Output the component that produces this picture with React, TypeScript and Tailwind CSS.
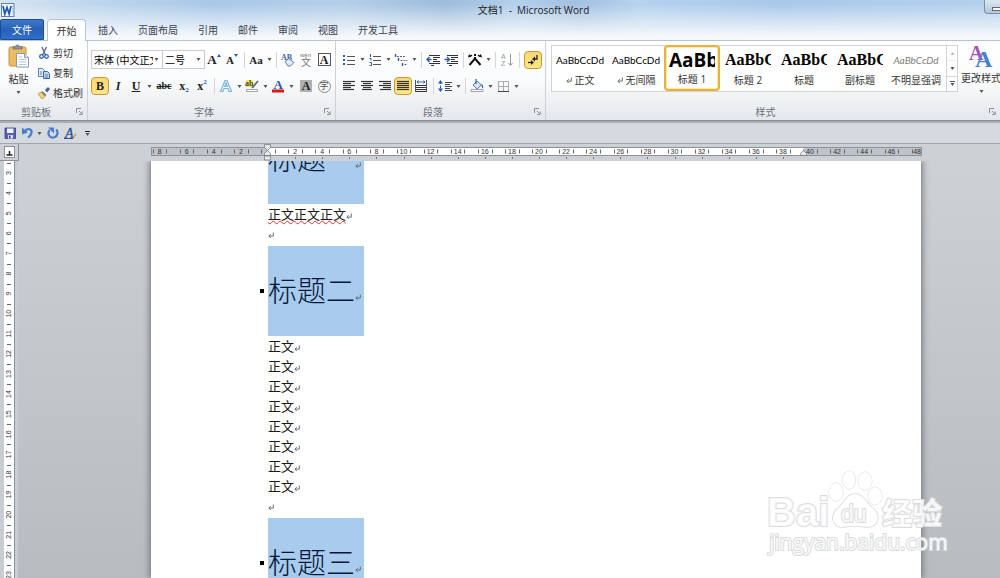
import type { ReactNode } from "react";
import clsx from "clsx";

const UI_FONT = "font-['Open_Sans','Noto_Sans_CJK_SC',sans-serif]";
const SERIF = "font-['Liberation_Serif',serif]";

const tabs = ["插入", "页面布局", "引用", "邮件", "审阅", "视图", "开发工具"];

const styleItems = [
  { label: "正文", sample: "AaBbCcDd", mark: true, font: "justify-center font-['Lato'] text-[10px] text-black" },
  { label: "无间隔", sample: "AaBbCcDd", mark: true, font: "justify-center font-['Lato'] text-[10px] text-black" },
  { label: "标题 1", sample: "AaBb", active: true, font: "font-['Open_Sans'] text-[19px] font-bold text-black" },
  { label: "标题 2", sample: "AaBbC", font: "font-['Liberation_Serif'] text-[16px] font-bold text-black" },
  { label: "标题", sample: "AaBbC", font: "font-['Liberation_Serif'] text-[16px] font-bold text-black" },
  { label: "副标题", sample: "AaBbC", font: "font-['Liberation_Serif'] text-[16px] font-bold text-black" },
  { label: "不明显强调", sample: "AaBbCcDd", font: "justify-center font-['Lato'] text-[10px] italic text-[#808080]" },
];

const Caret = ({ className = "" }: { className?: string }) => (
  <svg viewBox="0 0 5 3" className={clsx("w-[5px] h-[3px] shrink-0", className)}>
    <path d="M0.5 0h4L2.5 3z" fill="#555" />
  </svg>
);

const Sep = () => (
  <span className="flex w-[6px] shrink-0 justify-center">
    <span className="h-4 w-px bg-[#d3d6da]" />
  </span>
);

type ToolProps = {
  label: string;
  children: ReactNode;
  active?: boolean;
  menu?: boolean;
  wide?: boolean;
};

const Tool = ({ label, children, active, menu, wide }: ToolProps) => (
  <button
    type="button"
    aria-label={label}
    className={clsx(
      "flex h-[18px] shrink-0 items-center",
      active && "rounded-sm border border-[#c79a35] bg-linear-to-b from-[#fbd873] to-[#fde68a]"
    )}
  >
    <span
      className={clsx(
        "flex h-full items-center justify-center text-[#222]",
        wide ? "w-[22px]" : active ? "w-4" : "w-[18px]"
      )}
    >
      {children}
    </span>
    {menu && (
      <span className="flex w-2 justify-center">
        <Caret />
      </span>
    )}
  </button>
);

const Glyph = ({ children }: { children: ReactNode }) => (
  <svg viewBox="0 0 14 14" className="w-[14px] h-[14px] overflow-visible" fill="none">
    {children}
  </svg>
);

const ReturnMark = ({ className = "" }: { className?: string }) => (
  <svg viewBox="0 0 6 7" className={clsx("w-[6px] h-[7px] shrink-0", className)} fill="none" stroke="#6b7078">
    <path d="M5.3 0.5v3.6H1" />
    <path d="M2.8 2.2L0.8 4.1l2 2" />
  </svg>
);

const Launcher = () => (
  <button type="button" aria-label="更多选项" className="shrink-0">
    <svg viewBox="0 0 7 7" className="w-[7px] h-[7px]" fill="none" stroke="#8a8f96">
      <path d="M0.5 5V0.5H5" />
      <path d="M2.8 2.8l3 3M6.2 3.5v3H3.2" />
    </svg>
  </button>
);

type GroupProps = { title: string; className: string; children: ReactNode };

const Group = ({ title, className, children }: GroupProps) => (
  <section aria-label={title} className={clsx("flex flex-col", className)}>
    <div className="flex-1">{children}</div>
    <div className="flex h-[17px] items-center pr-[4px] text-[#6a717b]">
      <span className="flex-1 pr-1 text-center">{title}</span>
      <Launcher />
    </div>
  </section>
);

/* rows of text lines used by the alignment icons */
const Lines = ({ rows }: { rows: [number, number][] }) => (
  <Glyph>
    {rows.map(([x1, x2], i) => (
      <path key={i} d={`M${x1} ${2.5 + i * 2}H${x2}`} stroke="#333" strokeWidth="1.2" />
    ))}
  </Glyph>
);

const TitleBar = () => (
  <header className="flex h-[19px] items-center">
    <svg viewBox="0 0 14 14" className="ml-px h-[14px] w-[14px] shrink-0" fill="none">
      <rect x="0.5" y="0.5" width="12.5" height="13" fill="#f2f7fd" stroke="#5f84b3" />
      <path d="M11 3.5h1.500M11 6h1.500M11 8.500h1.500M11 11h1.500" stroke="#8da9cf" />
      <path d="M2 3l1.800 8L6 4.500 8.200 11 10 3" stroke="#1f57a8" strokeWidth="1.700" />
    </svg>
    <h1 className="flex-1 pl-[68px] text-center text-[10px] whitespace-pre text-[#1c1c1c]">
      {"文档1  -  Microsoft Word"}
    </h1>
    <button
      type="button"
      aria-label="最小化"
      className="h-[14px] w-4 self-start rounded-bl-[4px] border-b border-l border-[#7c8ea5] bg-linear-to-b from-[#dce8f4] to-[#b5c5d6] pl-[7px]"
    >
      <span className="mt-1 block h-[4px] border border-r-0 border-[#5b6878] bg-white" />
    </button>
  </header>
);

const TabBar = () => (
  <nav className="flex h-[22px] border-b border-[#b8c3d0]">
    <button type="button" className="w-11 rounded-t-xs border border-[#1d4b94] bg-linear-to-b from-[#3f78c8] via-[#2860b6] to-[#2f6fcb] text-white">
      文件
    </button>
    <button type="button" className="mr-[2px] -mb-px ml-[3px] w-[39px] rounded-t-sm border border-b-0 border-[#b8c3d0] bg-white text-[#333]">
      开始
    </button>
    {tabs.map((t) => (
      <button key={t} type="button" className="px-[10px] text-[#3b4350]">
        {t}
      </button>
    ))}
  </nav>
);

const Clipboard = () => (
  <Group title="剪贴板" className="w-[88px] shrink-0 border-r border-[#cdd1d6]">
    <div className="flex">
      <button type="button" className="flex w-[37px] flex-col items-center pt-[3px]">
        <svg viewBox="0 0 22 24" className="w-[22px] h-6">
          <rect x="1" y="3" width="17" height="19" rx="1.5" fill="#edbb62" stroke="#c9923c" />
          <path d="M5 5V2.5h2.5c.3-2 3.7-2 4 0H14V5z" fill="#8d949e" stroke="#666d77" strokeWidth=".7" />
          <path d="M8.500 9.500h8l4 4v9.500h-12z" fill="#fff" stroke="#8b9ab0" />
          <path d="M16.500 9.500v4h4" fill="#dbe5f2" stroke="#8b9ab0" />
          <path d="M10.500 13h4M10.500 15.500h8M10.500 18h8M10.500 20.500h8" stroke="#b7c7de" />
        </svg>
        <span className="pt-[4px] leading-[14px]">粘贴</span>
        <Caret className="mt-[5px]" />
      </button>
      <div className="flex flex-col pt-[2px]">
        <button type="button" className="flex h-5 items-center gap-[2px]">
          <Glyph>
            <path d="M5 1l3.500 8M9.500 1L5.500 9" stroke="#5d6f88" strokeWidth="1.400" />
            <circle cx="4.500" cy="10.500" r="1.800" stroke="#2a63b4" strokeWidth="1.300" />
            <circle cx="9.500" cy="10.500" r="1.800" stroke="#2a63b4" strokeWidth="1.300" />
          </Glyph>
          剪切
        </button>
        <button type="button" className="flex h-5 items-center gap-[2px]">
          <Glyph>
            <path d="M1.500 2.500h4l2 2v6h-6z" fill="#dfeafa" stroke="#5d86c2" />
            <path d="M6.500 5.500h4l2 2v5h-6z" fill="#bcd3f2" stroke="#3a6bb3" />
            <path d="M8 9h3M8 11h3M3 6h2M3 8h2" stroke="#5d86c2" />
          </Glyph>
          复制
        </button>
        <button type="button" className="flex h-5 items-center gap-[2px]">
          <Glyph>
            <path d="M8 4l3-3 2 2-3 3.500z" fill="#3d5f9c" />
            <path d="M5.500 5l4 4-1.500 1.500L4 6.500z" fill="#7a7f88" />
            <path d="M4 6L8 10.500 5 13 1 8z" fill="#f4d774" stroke="#a98a35" strokeWidth=".7" />
          </Glyph>
          格式刷
        </button>
      </div>
    </div>
  </Group>
);

const FontGroup = () => (
  <Group title="字体" className="w-[248px] shrink-0 border-r border-[#cdd1d6]">
    <div className="flex h-[19px] items-center mt-[9px] pl-[3px]">
      <div className="relative h-[19px] w-[72px]">
        <select aria-label="字体" className="h-full w-full appearance-none overflow-hidden border border-[#c9cdd3] bg-white pr-[9px] pl-[2px] text-black">
          <option>宋体 (中文正文)</option>
        </select>
        <Caret className="pointer-events-none absolute top-2 right-1" />
      </div>
      <div className="relative -ml-px h-[19px] w-[43px]">
        <select aria-label="字号" className="h-full w-full appearance-none border border-[#c9cdd3] bg-white pl-[2px] text-black">
          <option>二号</option>
        </select>
        <Caret className="pointer-events-none absolute top-2 right-1" />
      </div>
      <Tool label="增大字体">
        <span className={clsx(SERIF, "text-[13px] font-bold")}>A</span>
        <svg viewBox="0 0 4 3" className="mb-2 h-[3px] w-1"><path d="M0 3h4L2 0z" fill="#2a5caa" /></svg>
      </Tool>
      <Tool label="缩小字体">
        <span className={clsx(SERIF, "text-[11px] font-bold")}>A</span>
        <svg viewBox="0 0 4 3" className="mb-2 h-[3px] w-1"><path d="M0 0h4L2 3z" fill="#2a5caa" /></svg>
      </Tool>
      <Sep />
      <Tool label="更改大小写" menu>
        <span className={clsx(SERIF, "text-[11px] font-bold")}>Aa</span>
      </Tool>
      <Sep />
      <Tool label="清除格式">
        <Glyph>
          <text x="0" y="7" fontSize="8" fontWeight="700" fontFamily="Liberation Serif" fill="#3b62a5">AB</text>
          <path d="M4 8.500L8 5.500l5 4-3.500 3.500H7z" fill="#e3ebf7" stroke="#5a7db8" />
        </Glyph>
      </Tool>
      <Tool label="拼音指南">
        <Glyph>
          <text x="1" y="4" fontSize="6" fontFamily="Liberation Sans" fill="#777">wén</text>
          <text x="2" y="13" fontSize="10" fontFamily="Noto Sans CJK SC" fill="#777">文</text>
        </Glyph>
      </Tool>
      <Tool label="字符边框">
        <span className={clsx(SERIF, "flex h-[13px] w-[13px] items-center justify-center border border-[#556] text-[12px] font-bold")}>A</span>
      </Tool>
    </div>
    <div className="flex h-[18px] items-center mt-[8px] pl-[3px]">
      <Tool label="加粗" active>
        <b className={clsx(SERIF, "text-[12px]")}>B</b>
      </Tool>
      <Tool label="倾斜">
        <b className={clsx(SERIF, "text-[12px] italic")}>I</b>
      </Tool>
      <Tool label="下划线" menu>
        <b className={clsx(SERIF, "text-[12px] underline")}>U</b>
      </Tool>
      <Tool label="删除线" wide>
        <b className={clsx(SERIF, "text-[10px] line-through")}>abc</b>
      </Tool>
      <Tool label="下标">
        <b className={clsx(SERIF, "text-[12px]")}>x</b>
        <b className={clsx(SERIF, "mt-2 text-[7px] text-[#2a5caa]")}>2</b>
      </Tool>
      <Tool label="上标">
        <b className={clsx(SERIF, "text-[12px]")}>x</b>
        <b className={clsx(SERIF, "mb-2 text-[7px] text-[#2a5caa]")}>2</b>
      </Tool>
      <Sep />
      <Tool label="文本效果" menu>
        <Glyph>
          <path d="M1.500 12.500L6 1.500h2l4.500 11H10L9 9.500H5L4 12.500zM5.800 7.500h2.500L7 4z" fill="#f3f9ff" stroke="#7db2e2" strokeWidth="1.200" />
        </Glyph>
      </Tool>
      <Tool label="突出显示" menu>
        <Glyph>
          <path d="M1 1h7v7H1z" fill="#f3ef4a" />
          <text x="0" y="7" fontSize="8" fontWeight="700" fontFamily="Liberation Serif" fill="#444">ab</text>
          <path d="M13 2L7 9" stroke="#5b6779" strokeWidth="1.800" />
          <path d="M1.500 10.500h11v2h-11z" fill="#fff" stroke="#8b9098" strokeWidth=".8" />
        </Glyph>
      </Tool>
      <Tool label="字体颜色" menu>
        <Glyph>
          <text x="2.500" y="9.500" fontSize="13" fontWeight="700" fontFamily="Liberation Serif" fill="#2c56a3">A</text>
          <path d="M1 10.500h12v3H1z" fill="#d8161c" />
        </Glyph>
      </Tool>
      <Tool label="字符底纹">
        <span className={clsx(SERIF, "ml-1 flex h-3 w-3 items-center justify-center bg-[#b0b0b0] text-[12px] font-bold")}>A</span>
      </Tool>
      <Tool label="带圈字符">
        <span className="ml-1 flex h-[13px] w-[13px] shrink-0 items-center justify-center rounded-full border border-[#888] text-[9px] text-[#555]">字</span>
      </Tool>
    </div>
  </Group>
);

const Paragraph = () => (
  <Group title="段落" className="w-[210px] shrink-0 border-r border-[#cdd1d6]">
    <div className="flex h-[19px] items-center mt-[9px] pl-1">
      <Tool label="项目符号" menu>
        <Glyph>
          <path d="M1 2h2v2H1zM1 6h2v2H1zM1 10h2v2H1z" fill="#2a5caa" />
          <path d="M5 3.500h8M5 7.500h8M5 11.500h8" stroke="#555" />
        </Glyph>
      </Tool>
      <Tool label="编号" menu>
        <Glyph>
          <path d="M2.500 1v3M1.500 5.500h1.500v2M1.500 9.500h2v3h-2" stroke="#2a5caa" />
          <path d="M5 3.500h8M5 7.500h8M5 11.500h8" stroke="#555" />
        </Glyph>
      </Tool>
      <Tool label="多级列表" menu>
        <Glyph>
          <path d="M1.500 1v3M4.500 5v3M8.500 10v3" stroke="#2a5caa" strokeWidth="1.400" />
          <path d="M3 3.500h9M6.500 7.500h7M10.500 11.500h3" stroke="#666" strokeDasharray="2 1" />
        </Glyph>
      </Tool>
      <Sep />
      <Tool label="减少缩进量">
        <Glyph>
          <path d="M3 2.500h11M7 4.500h7M7 6.500h4M7 8.500h7M3 10.500h11M5 12.500h3" stroke="#333" strokeWidth="1.2" />
          <path d="M0.500 6.500h5M3.500 4L1 6.500 3.500 9" stroke="#2a5caa" strokeWidth="1.400" />
        </Glyph>
      </Tool>
      <Tool label="增加缩进量">
        <Glyph>
          <path d="M3 2.500h11M7 4.500h7M7 6.500h4M7 8.500h7M3 10.500h11M5 12.500h3" stroke="#333" strokeWidth="1.2" />
          <path d="M0.500 6.500h5M3 4l2.500 2.500L3 9" stroke="#2a5caa" strokeWidth="1.400" />
        </Glyph>
      </Tool>
      <Sep />
      <Tool label="中文版式" menu>
        <Glyph>
          <path d="M1.500 12L7 5.500 12.500 12M7 6V4" stroke="#111" strokeWidth="2" />
          <path d="M2 3.500l2-1.500M12 3.500L10 2" stroke="#111" strokeWidth="1.300" />
          <path d="M0 4.500L1 1l2.500 2.500zM14 4.500L13 1l-2.500 2.500zM6 1h2v2H6z" fill="#111" />
        </Glyph>
      </Tool>
      <Sep />
      <Tool label="排序">
        <Glyph>
          <text x="1" y="6" fontSize="7" fontFamily="Liberation Sans" fill="#999">A</text>
          <text x="1" y="13" fontSize="7" fontFamily="Liberation Sans" fill="#999">Z</text>
          <path d="M10.500 1v11M8.500 10l2 2.500 2-2.500" stroke="#999" />
        </Glyph>
      </Tool>
      <Sep />
      <span className="pl-[2px]">
        <Tool label="显示编辑标记" active>
          <Glyph>
            <path d="M11 2v4H7.500" stroke="#222" strokeWidth="1.300" />
            <path d="M9 3.500v5L6 6z" fill="#222" />
            <path d="M2 9.500h3.500" stroke="#222" strokeWidth="1.300" />
            <path d="M5 7v5l3-2.500z" fill="#222" />
          </Glyph>
        </Tool>
      </span>
    </div>
    <div className="flex h-[18px] items-center mt-[8px] pl-1">
      <Tool label="左对齐">
        <Lines rows={[[1, 13], [1, 9], [1, 13], [1, 9], [1, 12]]} />
      </Tool>
      <Tool label="居中">
        <Lines rows={[[1, 13], [3, 11], [1, 13], [3, 11], [2, 12]]} />
      </Tool>
      <Tool label="右对齐">
        <Lines rows={[[1, 13], [5, 13], [1, 13], [5, 13], [2, 13]]} />
      </Tool>
      <Tool label="两端对齐" active>
        <Lines rows={[[1, 13], [1, 13], [1, 13], [1, 13], [1, 13]]} />
      </Tool>
      <Tool label="分散对齐">
        <Glyph>
          <path d="M1.500 1v12M12.500 1v12" stroke="#555" />
          <path d="M3 3h8M4.500 1.500L3 3l1.500 1.500M9.500 1.500L11 3 9.500 4.500" stroke="#2a5caa" />
          <path d="M2 6.500h10M2 8.500h10M2 10.500h10M2 12.500h10" stroke="#333" strokeWidth="1.2" />
        </Glyph>
      </Tool>
      <Sep />
      <Tool label="行距" menu>
        <Glyph>
          <path d="M2.500 2v10" stroke="#2a5caa" strokeDasharray="3 1.500" />
          <path d="M0 4.500L2.500 1 5 4.500zM0 9.500L2.500 13 5 9.500z" fill="#2a5caa" />
          <path d="M7 3.500h7M7 5.500h5M7 7.500h7M7 9.500h5M7 11.500h7" stroke="#444" />
        </Glyph>
      </Tool>
      <Sep />
      <Tool label="底纹" menu>
        <Glyph>
          <path d="M3 6l4-4 4.500 4L7 10z" fill="#d5e4f6" stroke="#5a7db8" />
          <path d="M6 0v5M11.500 5.500c1 1 1.500 2.500 1 3.500" stroke="#3f67a8" strokeWidth="1.300" />
          <path d="M1 10.500h12v2H1z" fill="#fff" stroke="#8b9098" strokeWidth=".8" />
        </Glyph>
      </Tool>
      <Tool label="边框" menu>
        <Glyph>
          <path d="M2.500 2v10M12.500 2v10M2 2.500h11M7.500 2v10M2 7.500h11" stroke="#a9adb3" />
          <path d="M2 12.500h11" stroke="#444" />
        </Glyph>
      </Tool>
    </div>
  </Group>
);

const Styles = () => (
  <Group title="样式" className="min-w-0 flex-1">
    <div className="flex pl-[5px]">
      <div className="mt-[4px] flex h-[47px] shrink-0 border border-[#d0d4da] bg-white">
        {styleItems.map((s) => (
          <button
            key={s.label}
            type="button"
            className={clsx(
              "flex w-14 flex-col items-center whitespace-nowrap",
              s.active && "-mt-px h-[46px] rounded-sm border-2 border-[#e3b33e] bg-white shadow-[inset_0_0_0_1px_#fbe9ab]"
            )}
          >
            <span
              className={clsx(
                "flex w-[46px] items-center leading-6",
                s.active ? "h-[26px] overflow-hidden" : "h-7",
                s.sample === "AaBbC" && "overflow-hidden",
                s.font
              )}
            >
              {s.sample}
            </span>
            <span className="flex items-center gap-[3px] leading-[12px] text-[#333]">
              {s.mark && <ReturnMark className="h-[5px]" />}
              {s.label}
            </span>
          </button>
        ))}
        <div className="ml-[2px] flex w-[11px] flex-col divide-y divide-[#d0d4da] border-l border-[#d0d4da]">
          <button type="button" aria-label="上一行" className="flex flex-1 items-center justify-center opacity-40">
            <Caret className="rotate-180" />
          </button>
          <button type="button" aria-label="下一行" className="flex flex-1 items-center justify-center">
            <Caret />
          </button>
          <button type="button" aria-label="其他" className="flex flex-1 flex-col items-center justify-center gap-px">
            <span className="h-px w-[5px] bg-[#555]" />
            <Caret />
          </button>
        </div>
      </div>
      <button type="button" className="ml-[3px] flex shrink-0 flex-col items-center pt-[4px]">
        <svg viewBox="0 0 24 24" className="h-6 w-6" fontFamily="Liberation Serif" fontWeight="700">
          <text x="0" y="15" fontSize="20" fill="#a653b5">A</text>
          <text x="6" y="22" fontSize="24" fill="#4a80cc">A</text>
        </svg>
        <span className="pt-[2px] leading-[14px] whitespace-nowrap">更改样式</span>
        <Caret className="mt-[5px]" />
      </button>
    </div>
  </Group>
);

const QuickAccess = () => (
  <div className="flex h-5 items-center gap-[3px] bg-[#d6d9de] pl-[3px]">
    <button type="button" aria-label="保存">
      <Glyph>
        <path d="M2 2h10.500v10.500H2z" fill="#5560b4" stroke="#383f8e" strokeWidth=".8" />
        <path d="M4 2.500h6.500v4.500H4z" fill="#eef1fa" />
        <path d="M5 9h5v3.500H5z" fill="#dfe3f3" />
        <path d="M6 9.500h1.500v2.500H6z" fill="#333a80" />
      </Glyph>
    </button>
    <button type="button" aria-label="撤消" className="flex items-center gap-[3px]">
      <Glyph>
        <path d="M5 4.500c3-2.500 7-1.500 6.500 2-.3 2.500-2 4-3.500 5" stroke="#4a7dcb" strokeWidth="2.200" />
        <path d="M2 1.500v7l6-2z" fill="#4a7dcb" />
      </Glyph>
      <Caret />
    </button>
    <button type="button" aria-label="重复" className="ml-px">
      <Glyph>
        <path d="M3.500 4c-2.500 4 0 8 4 7.500 4.500-.5 5-6 2.500-8" stroke="#4a7dcb" strokeWidth="2.200" />
        <path d="M2 1.500h6v6z" fill="#4a7dcb" />
      </Glyph>
    </button>
    <button type="button" aria-label="格式">
      <Glyph>
        <text x="2" y="12" fontSize="14" fontStyle="italic" fontFamily="Liberation Serif" fill="#2e4f94" stroke="#2e4f94" strokeWidth=".3">A</text>
        <path d="M1 12.500h9" stroke="#2e4f94" />
        <path d="M13 8L10 12" stroke="#d0a545" strokeWidth="1.600" />
      </Glyph>
    </button>
    <button type="button" aria-label="自定义快速访问工具栏" className="ml-[5px] flex flex-col items-center gap-px">
      <span className="h-px w-[5px] bg-[#222]" />
      <Caret />
    </button>
  </div>
);

/* one character unit of the ruler, in pixels */
const UNIT = 13.55;

const HorizontalRuler = () => {
  const origin = 117;
  const numbers = Array.from({ length: 28 }, (_, i) => (i - 4) * 2);
  const ticks = Array.from({ length: 57 }, (_, i) => i - 8.5);
  return (
    <div className="relative h-[17px] flex-1 overflow-hidden">
      <div className="mt-[3px] flex h-[9px] border border-[#8d929a] bg-[#bfc3c8]">
        <span className="w-[116px]" />
        <span className="flex-1 bg-white" />
        <span className="w-[117px]" />
      </div>
      <svg className="absolute inset-0 h-full w-full" fontFamily="Liberation Sans" fontSize="7" fill="#333" textAnchor="middle">
        {numbers.map((n) =>
          n === 0 ? null : (
            <text key={n} x={origin + n * UNIT} y="10">{Math.abs(n)}</text>
          )
        )}
        <text x={origin + 47.9 * UNIT} y="10">48</text>
        {ticks.map((t) => (
          <path key={t} d={`M${Math.round(origin + t * UNIT)}.5 5.500v4`} stroke="#666" />
        ))}
        {numbers.filter((n) => n > 0 && n < 40).map((n) => (
          <path key={n} d={`M${Math.round(origin + n * UNIT)}.5 13v2`} stroke="#777" />
        ))}
        <g fill="#e8eaed" stroke="#777c84" strokeWidth=".8">
          <path d="M113.500 0.500h6v3l-3 3-3-3z" />
          <path d="M116.500 6.500l3 3v2h-6v-2z" />
          <path d="M113.500 12h6v4h-6z" />
          <path d="M652.500 6.500l3 3v2h-6v-2z" />
        </g>
      </svg>
    </div>
  );
};

const VerticalRuler = () => (
  <div className="w-[18px] shrink-0 bg-[#c9cdd3] pl-[4px]">
    <svg className="h-full w-[11px] border-r border-[#8d929a] bg-white" fontFamily="Liberation Sans" fontSize="7" fill="#333" textAnchor="middle">
      {Array.from({ length: 21 }, (_, i) => {
        const y = 12 + i * 20.1;
        return (
          <g key={i}>
            <path d={`M3 ${Math.round(y - 10)}.5h4`} stroke="#666" />
            <text transform={`translate(7 ${y}) rotate(-90)`}>{i + 3}</text>
          </g>
        );
      })}
    </svg>
  </div>
);

const Heading = ({ children, bullet = true }: { children: string; bullet?: boolean }) => (
  <div className="flex h-[90px] shrink-0 items-center">
    <span className="flex w-[117px] justify-end pr-1">{bullet && <span className="h-1 w-1 bg-black" />}</span>
    <h2 className="flex h-full w-24 items-center bg-[#a9cbee] pb-1 text-[29px] leading-none font-light text-[#04183a]">
      {children}
      <ReturnMark className="mt-4" />
    </h2>
  </div>
);

const Line = ({ children, wavy }: { children: string; wavy?: boolean }) => (
  <p className="flex h-5 shrink-0 items-center pl-[117px] text-[13px] leading-5 text-[#1a1a1a]">
    <span className={clsx(wavy && "underline decoration-[#d33] decoration-wavy decoration-1 underline-offset-1")}>{children}</span>
    <ReturnMark className="mt-1" />
  </p>
);

const Blank = () => (
  <p className="flex h-[22px] shrink-0 items-center pl-[117px]">
    <ReturnMark />
  </p>
);

const Watermark = () => (
  <svg
    viewBox="0 0 184 92"
    aria-label="Baidu 经验"
    className="pointer-events-none absolute right-[51px] bottom-[18px] h-[92px] w-[184px]"
    fill="#fff"
    fillOpacity=".85"
    stroke="#dadcde"
    fontFamily="Liberation Sans, Noto Sans CJK SC, sans-serif"
    fontWeight="700"
    paintOrder="stroke"
  >
    <text x="2" y="58" fontSize="40" strokeWidth="2">Bai</text>
    <ellipse cx="71" cy="24" rx="7" ry="9" />
    <ellipse cx="84" cy="12" rx="6.500" ry="9" />
    <ellipse cx="100" cy="13" rx="7" ry="9" />
    <ellipse cx="110" cy="28" rx="7" ry="9" />
    <path d="M90 26c-9 0-10 9-17 14-9 8-5 19 4 19 5 0 8-1 13-1s8 1 13 1c9 0 14-10 5-19-7-5-9-14-18-14z" strokeWidth="1.500" />
    <text x="76" y="54" fontSize="23" fontWeight="400" strokeWidth="2">du</text>
    <text x="117" y="56" fontSize="30" strokeWidth="2">经验</text>
    <text x="4" y="82" fontSize="21" fontWeight="400" strokeWidth="2" fontFamily="Open Sans">jingyan.baidu.com</text>
  </svg>
);

const App = () => {
  return (
    <div className={clsx(UI_FONT, "flex h-screen flex-col overflow-hidden bg-[#cbced3] text-[10px] leading-[14px] text-[#333]")}>
      <div className="shrink-0 bg-[linear-gradient(to_bottom,transparent_10%,#f6f9fc_90%),linear-gradient(75deg,#dbe6f0_0%,#c3d9ee_8%,#a9c8e8_22%,#b4cfea_35%,#9dbddc_45%,#b3d0ec_52%,#a3c1e0_58%,#b5d2ef_64%,#a9c9ea_78%,#b5d1ee_100%)]">
        <TitleBar />
        <TabBar />
      </div>
      <div className="flex h-[79px] shrink-0 bg-linear-to-b from-white via-[#fafbfc] to-[#e4e7eb]">
        <Clipboard />
        <FontGroup />
        <Paragraph />
        <Styles />
      </div>
      <div className="h-[3px] shrink-0 border-t border-[#8b9098] bg-[#a9adb4]" />
      <QuickAccess />
      <div className="flex shrink-0 border-t border-[#a0a6b0] bg-[#cdd0d5]">
        <div className="flex h-[17px] w-[19px] items-center justify-center border-r border-b border-[#8d929a]">
          <span className="flex h-3 w-[11px] items-end justify-center border border-[#8d929a] bg-white">
            <svg viewBox="0 0 7 7" className="h-[7px] w-[7px]">
              <path d="M3.500 1v4M0.500 5h6" stroke="#222" strokeWidth="1.500" />
            </svg>
          </span>
        </div>
        <div className="flex flex-1 pr-[78px] pl-[132px]">
          <HorizontalRuler />
        </div>
      </div>
      <div className="relative flex min-h-0 flex-1 overflow-hidden">
        <VerticalRuler />
        <main className="flex flex-1 bg-linear-to-b from-[#cdd0d4] to-[#b8bcc1] pr-[79px] pl-[133px]">
          <article className="flex flex-1 flex-col overflow-visible bg-white font-['Noto_Sans_CJK_SC',sans-serif] shadow-[0_0_7px_1px_#6b7077]">
            <div className="flex h-[43px] shrink-0 flex-col justify-end overflow-hidden">
              <Heading bullet={false}>标题一</Heading>
            </div>
            <Line wavy>正文正文正文</Line>
            <Blank />
            <Heading>标题二</Heading>
            {Array.from({ length: 8 }, (_, i) => (
              <Line key={i}>正文</Line>
            ))}
            <Blank />
            <Heading>标题三</Heading>
          </article>
        </main>
        <Watermark />
      </div>
    </div>
  );
};

export default App;
